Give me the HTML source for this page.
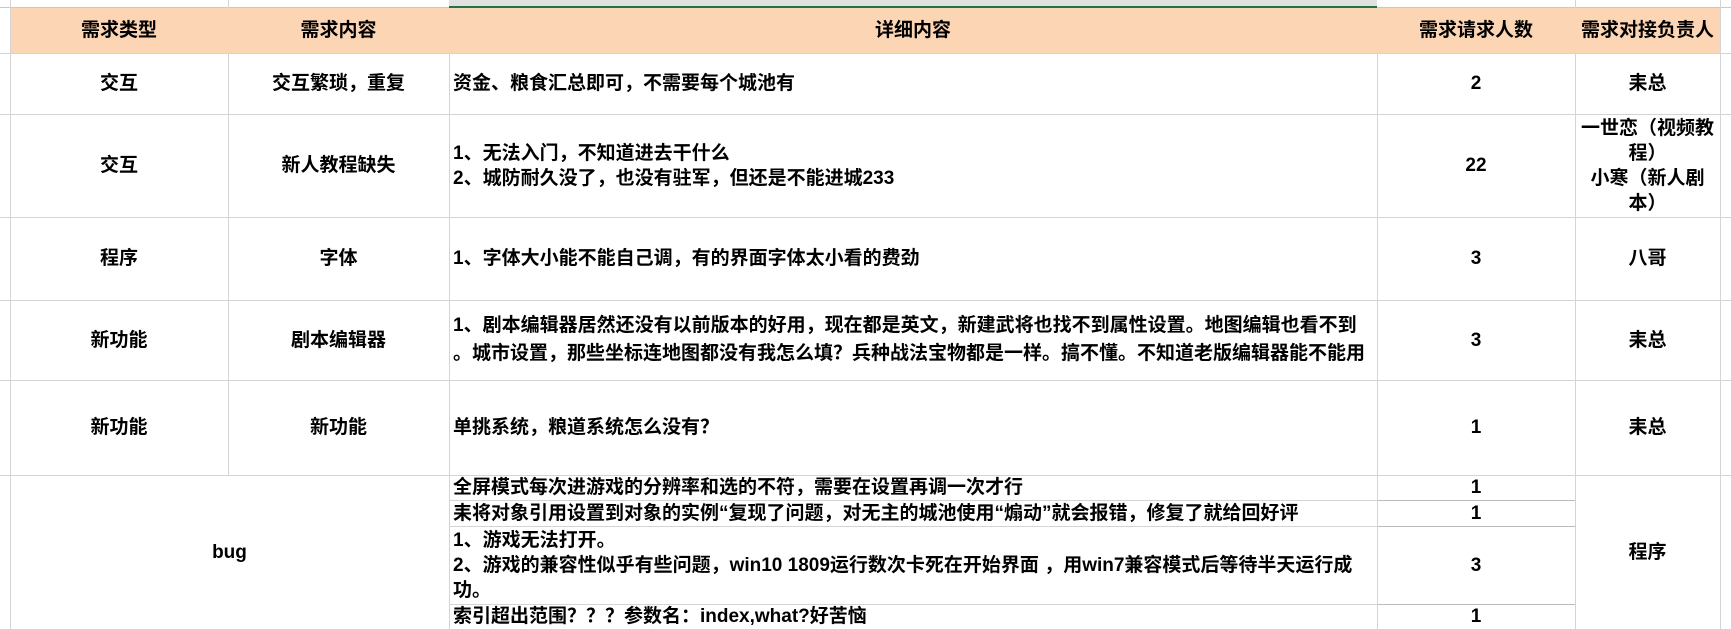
<!DOCTYPE html>
<html><head><meta charset="utf-8"><style>
body{margin:0;width:1731px;height:629px;overflow:hidden;background:#fff;font-family:"Liberation Sans","Noto Sans CJK SC","Microsoft YaHei",sans-serif;font-weight:bold;color:#000;position:relative}
.c{position:absolute;box-sizing:border-box;display:flex;align-items:center;font-size:19px;line-height:25px}
.ctr{justify-content:center;text-align:center}
.l{padding-left:4px}
.hl{position:absolute;height:1px;background:#d4d4d4;left:0;width:1731px}
.vl{position:absolute;width:1px;background:#d4d4d4}
</style></head><body>
<div style="position:absolute;left:0;top:0;width:1731px;height:7px;background:#fff;border-bottom:1px solid #c8c8c8"></div>
<div style="position:absolute;left:449px;top:0;width:928px;height:6px;background:#e1e1e1;border-bottom:2px solid #217346"></div>
<div style="position:absolute;left:10px;top:8px;width:1710px;height:45px;background:#fcd5b4"></div>
<div class="hl" style="top:53px"></div>
<div class="hl" style="top:114px"></div>
<div class="hl" style="top:217px"></div>
<div class="hl" style="top:300px"></div>
<div class="hl" style="top:380px"></div>
<div class="hl" style="top:475px"></div>
<div class="hl" style="top:500px;left:449px;width:928px"></div>
<div class="hl" style="top:526px;left:449px;width:928px"></div>
<div class="hl" style="top:604px;left:449px;width:928px"></div>
<div class="hl" style="top:500px;left:1377px;width:198px;background:#bbb"></div>
<div class="hl" style="top:526px;left:1377px;width:198px;background:#bbb"></div>
<div class="hl" style="top:604px;left:1377px;width:198px;background:#bbb"></div>
<div class="vl" style="left:10px;top:0;height:629px"></div>
<div class="vl" style="left:228px;top:0;height:8px"></div>
<div class="vl" style="left:228px;top:53px;height:422px"></div>
<div class="vl" style="left:449px;top:53px;height:576px"></div>
<div class="vl" style="left:1377px;top:53px;height:576px"></div>
<div class="vl" style="left:1575px;top:0;height:8px"></div>
<div class="vl" style="left:1575px;top:53px;height:576px"></div>
<div class="vl" style="left:1720px;top:0;height:629px"></div>

<div class="c ctr" style="left:10px;top:8px;width:218px;height:45px">需求类型</div>
<div class="c ctr" style="left:228px;top:8px;width:221px;height:45px">需求内容</div>
<div class="c ctr" style="left:449px;top:8px;width:928px;height:45px">详细内容</div>
<div class="c ctr" style="left:1377px;top:8px;width:198px;height:45px">需求请求人数</div>
<div class="c ctr" style="left:1575px;top:8px;width:145px;height:45px">需求对接负责人</div>

<div class="c ctr" style="left:10px;top:53px;width:218px;height:61px">交互</div>
<div class="c ctr" style="left:228px;top:53px;width:221px;height:61px">交互繁琐，重复</div>
<div class="c l" style="left:449px;top:53px;width:928px;height:61px">资金、粮食汇总即可，不需要每个城池有</div>
<div class="c ctr" style="left:1377px;top:53px;width:198px;height:61px">2</div>
<div class="c ctr" style="left:1575px;top:53px;width:145px;height:61px">耒总</div>

<div class="c ctr" style="left:10px;top:114px;width:218px;height:103px">交互</div>
<div class="c ctr" style="left:228px;top:114px;width:221px;height:103px">新人教程缺失</div>
<div class="c l" style="left:449px;top:114px;width:928px;height:103px">1、无法入门，不知道进去干什么<br>2、城防耐久没了，也没有驻军，但还是不能进城233</div>
<div class="c ctr" style="left:1377px;top:114px;width:198px;height:103px">22</div>
<div class="c ctr" style="left:1575px;top:114px;width:145px;height:103px;white-space:nowrap">一世恋（视频教<br>程）<br>小寒（新人剧<br>本）</div>

<div class="c ctr" style="left:10px;top:217px;width:218px;height:83px">程序</div>
<div class="c ctr" style="left:228px;top:217px;width:221px;height:83px">字体</div>
<div class="c l" style="left:449px;top:217px;width:928px;height:83px">1、字体大小能不能自己调，有的界面字体太小看的费劲</div>
<div class="c ctr" style="left:1377px;top:217px;width:198px;height:83px">3</div>
<div class="c ctr" style="left:1575px;top:217px;width:145px;height:83px">八哥</div>

<div class="c ctr" style="left:10px;top:300px;width:218px;height:80px">新功能</div>
<div class="c ctr" style="left:228px;top:300px;width:221px;height:80px">剧本编辑器</div>
<div class="c l" style="left:449px;top:300px;width:928px;height:80px;line-height:28px;white-space:nowrap">1、剧本编辑器居然还没有以前版本的好用，现在都是英文，新建武将也找不到属性设置。地图编辑也看不到<br>。城市设置，那些坐标连地图都没有我怎么填？兵种战法宝物都是一样。搞不懂。不知道老版编辑器能不能用</div>
<div class="c ctr" style="left:1377px;top:300px;width:198px;height:80px">3</div>
<div class="c ctr" style="left:1575px;top:300px;width:145px;height:80px">耒总</div>

<div class="c ctr" style="left:10px;top:380px;width:218px;height:95px">新功能</div>
<div class="c ctr" style="left:228px;top:380px;width:221px;height:95px">新功能</div>
<div class="c l" style="left:449px;top:380px;width:928px;height:95px">单挑系统，粮道系统怎么没有？</div>
<div class="c ctr" style="left:1377px;top:380px;width:198px;height:95px">1</div>
<div class="c ctr" style="left:1575px;top:380px;width:145px;height:95px">耒总</div>

<div class="c ctr" style="left:10px;top:475px;width:439px;height:154px">bug</div>
<div class="c l" style="left:449px;top:475px;width:928px;height:25px;white-space:nowrap">全屏模式每次进游戏的分辨率和选的不符，需要在设置再调一次才行</div>
<div class="c ctr" style="left:1377px;top:475px;width:198px;height:25px">1</div>
<div class="c l" style="left:449px;top:500px;width:928px;height:26px;white-space:nowrap">耒将对象引用设置到对象的实例“复现了问题，对无主的城池使用“煽动”就会报错，修复了就给回好评</div>
<div class="c ctr" style="left:1377px;top:500px;width:198px;height:26px">1</div>
<div class="c l" style="left:449px;top:526px;width:928px;height:78px;white-space:nowrap">1、游戏无法打开。<br>2、游戏的兼容性似乎有些问题，win10 1809运行数次卡死在开始界面 ，用win7兼容模式后等待半天运行成<br>功。</div>
<div class="c ctr" style="left:1377px;top:526px;width:198px;height:78px">3</div>
<div class="c l" style="left:449px;top:604px;width:928px;height:25px;white-space:nowrap">索引超出范围？？？参数名：index,what?好苦恼</div>
<div class="c ctr" style="left:1377px;top:604px;width:198px;height:25px">1</div>
<div class="c ctr" style="left:1575px;top:475px;width:145px;height:154px">程序</div>
</body></html>
